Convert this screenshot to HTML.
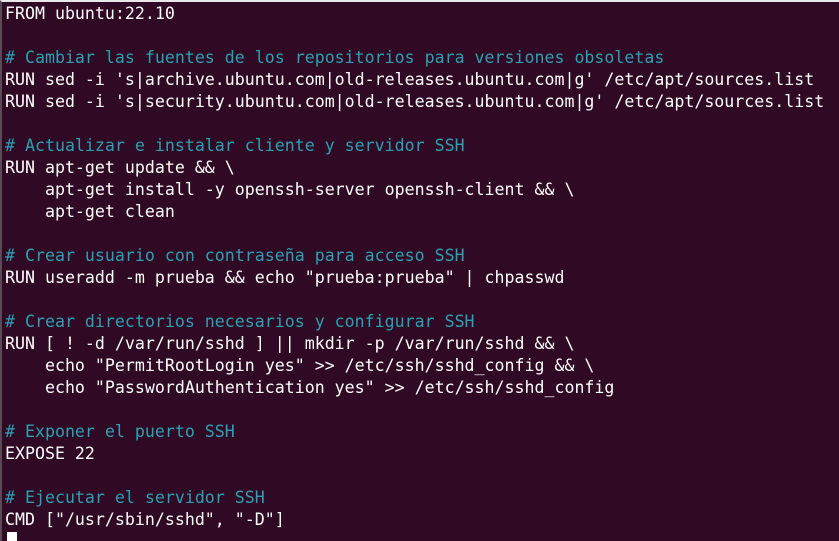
<!DOCTYPE html>
<html><head><meta charset="utf-8"><style>
html,body{margin:0;padding:0;width:839px;height:541px;overflow:hidden;background:#300a24;}
body{border-top:2px solid #e8e8e8;box-sizing:border-box;border-left:2px solid #5a4a55;position:relative;}
pre{margin:0;padding:1px 0 0 3px;font-family:"DejaVu Sans Mono","Liberation Mono",monospace;font-size:16.6px;line-height:22px;color:#ffffff;white-space:pre;}
.c{color:#2aa1b3;}
.cur{position:absolute;left:5px;top:530px;width:10px;height:11px;background:#fff;}
</style></head><body><pre>FROM ubuntu:22.10

<span class="c"># Cambiar las fuentes de los repositorios para versiones obsoletas</span>
RUN sed -i 's|archive.ubuntu.com|old-releases.ubuntu.com|g' /etc/apt/sources.list
RUN sed -i 's|security.ubuntu.com|old-releases.ubuntu.com|g' /etc/apt/sources.list

<span class="c"># Actualizar e instalar cliente y servidor SSH</span>
RUN apt-get update &amp;&amp; \
    apt-get install -y openssh-server openssh-client &amp;&amp; \
    apt-get clean

<span class="c"># Crear usuario con contraseña para acceso SSH</span>
RUN useradd -m prueba &amp;&amp; echo "prueba:prueba" | chpasswd

<span class="c"># Crear directorios necesarios y configurar SSH</span>
RUN [ ! -d /var/run/sshd ] || mkdir -p /var/run/sshd &amp;&amp; \
    echo "PermitRootLogin yes" &gt;&gt; /etc/ssh/sshd_config &amp;&amp; \
    echo "PasswordAuthentication yes" &gt;&gt; /etc/ssh/sshd_config

<span class="c"># Exponer el puerto SSH</span>
EXPOSE 22

<span class="c"># Ejecutar el servidor SSH</span>
CMD ["/usr/sbin/sshd", "-D"]</pre><div class="cur"></div></body></html>
